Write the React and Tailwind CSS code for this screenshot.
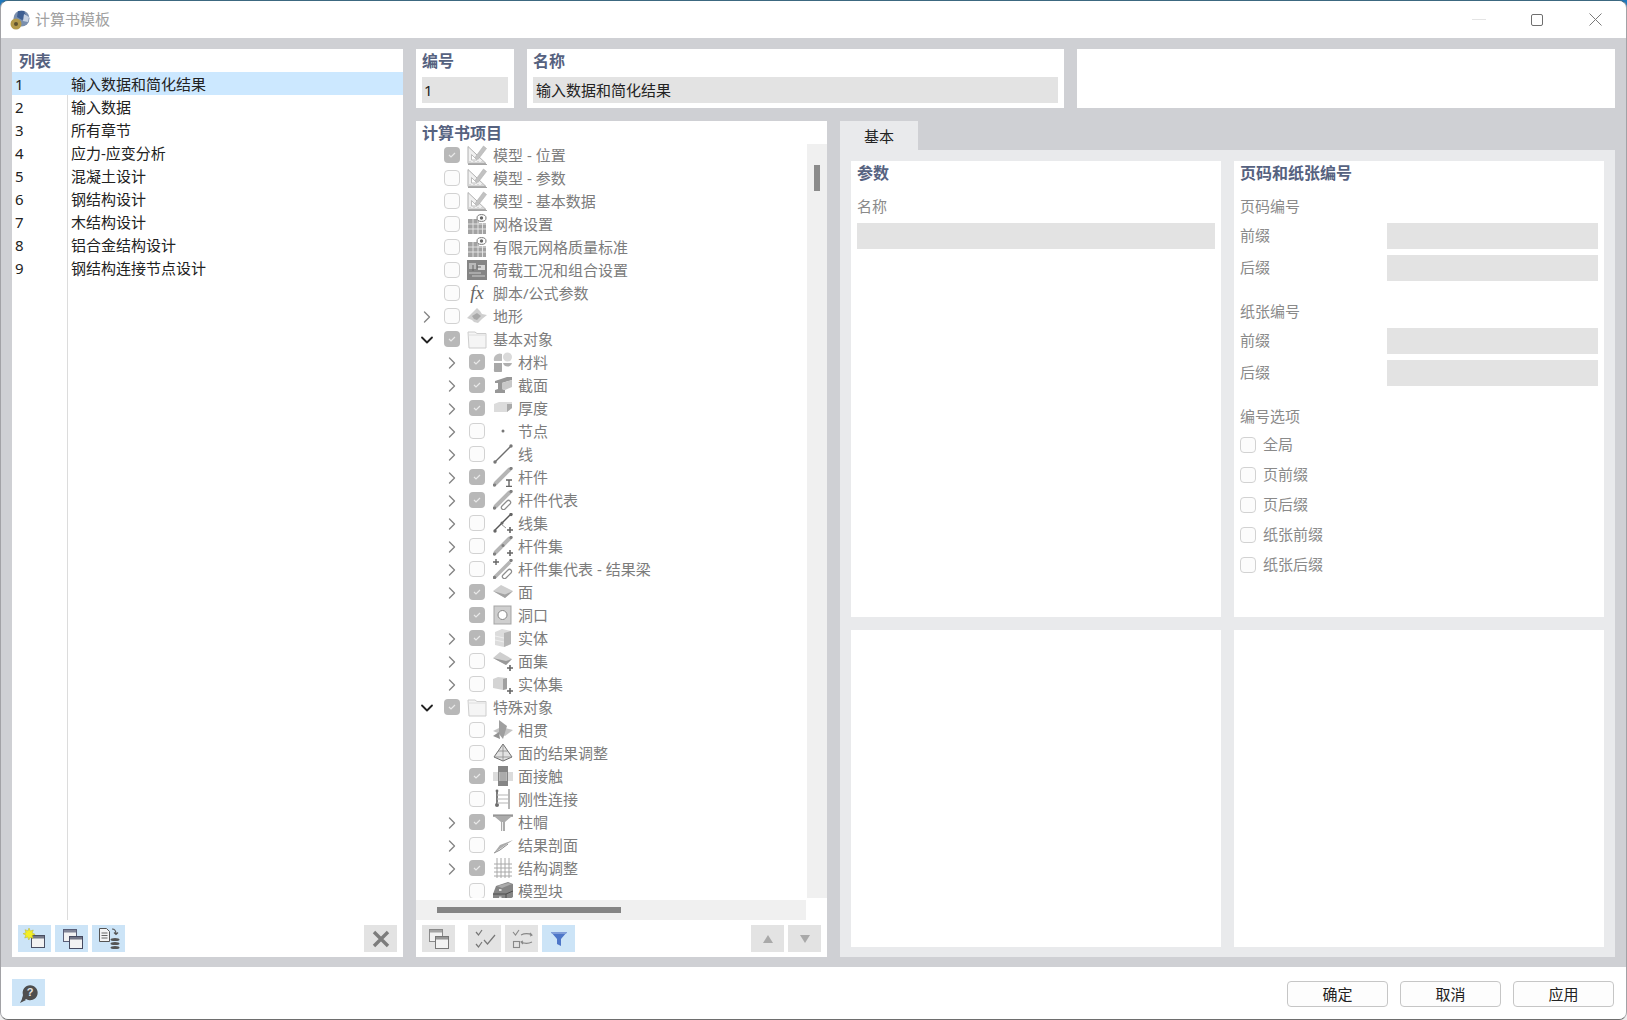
import { ChevronRight, ChevronDown } from "lucide-react";

/* Report template dialog. Everything is disabled grey except the left list. */

const LIST = ["输入数据和简化结果", "输入数据", "所有章节", "应力-应变分析", "混凝土设计", "钢结构设计", "木结构设计", "铝合金结构设计", "钢结构连接节点设计"];

function Ic({ children }) {
  return (
    <svg width="20" height="20" viewBox="0 0 20 20" className="block shrink-0">
      {children}
    </svg>
  );
}

const Plus = () => <path d="M14 17h6M17 14v6" stroke="#666" strokeWidth="1.600" fill="none" />;

const ICONS = {
  model: (
    <Ic>
      <path d="M1 1.500v17h18z" fill="#f0f0f0" stroke="#b0b0b0" />
      <path d="M4.500 9.500v5.500h5.500z" fill="#fff" stroke="#bdbdbd" />
      <path d="M1 19.500h19" stroke="#a5a5a5" />
      <path d="M3 16v3M5 17v2M7 16v3M9 17v2M11 16v3M13 17v2M15 16v3M17 17v2" stroke="#aaa" strokeWidth=".7" />
      <path d="M8 12.500 L16.500 1 L19.500 3.500 L11 14.500z" fill="#c2c2c2" stroke="#b0b0b0" strokeWidth=".6" />
    </Ic>
  ),
  mesh: (
    <Ic>
      <path d="M1 5h11v4h7v11H1z" fill="#a2a2a2" />
      <path d="M1 10h18M1 15h18M6 5v15M11 5v15M15.500 9v11" stroke="#e8e8e8" strokeWidth=".9" />
      <ellipse cx="14.500" cy="4" rx="4.500" ry="3.400" fill="#fff" stroke="#777" />
      <circle cx="14.500" cy="4" r="1.700" fill="#666" />
    </Ic>
  ),
  load: (
    <Ic>
      <rect x="0" y="0" width="20" height="20" fill="#858585" />
      <rect x="2" y="3" width="7" height="6" fill="#b9b9b9" />
      <rect x="11" y="5" width="7" height="5" fill="#d5d5d5" />
      <path d="M2 12h12v2H2zM5 15h13v2H5z" fill="#a9a9a9" />
      <path d="M6 5v6M10 7h4" stroke="#666" />
    </Ic>
  ),
  fx: null,
  terrain: (
    <Ic>
      <path d="M0 12l5-5 5-5 3 3 2 3 5 1-5 4-4 4-4-1-2-2z" fill="#cfcfcf" />
      <path d="M5 10l5-3 4 3-4 4-3-1z" fill="#a8a8a8" />
    </Ic>
  ),
  folder: (
    <Ic>
      <path d="M1 3h7l2 1.500h9V19H2z" fill="#f5f5f5" stroke="#cdcdcd" />
      <path d="M1.500 6h17" stroke="#dedede" />
    </Ic>
  ),
  material: (
    <Ic>
      <path d="M1 9a6 6 0 0 1 8-7v7z" fill="#bdbdbd" />
      <circle cx="14.500" cy="5" r="4.500" fill="#dadada" />
      <path d="M1 11h8v8a4 4 0 0 1-8-2z" fill="#a8a8a8" />
      <path d="M10 11h9a4.800 5.500 0 0 1-9 0z" fill="#b0b0b0" />
    </Ic>
  ),
  section: (
    <Ic>
      <path d="M2 6l12-4h5v3L9 8v6l3 1v3H2v-3l3-1V8L2 8z" fill="#979797" />
      <path d="M9 8l10-3v7l-7 3-3-1z" fill="#c8c8c8" />
    </Ic>
  ),
  thickness: (
    <Ic>
      <path d="M1 6l5-2h13v6l-5 4H1z" fill="#dcdcdc" />
      <path d="M14 6h5v4l-5 4z" fill="#aaa" />
    </Ic>
  ),
  node: (
    <Ic>
      <circle cx="10" cy="10" r="1.500" fill="#777" />
    </Ic>
  ),
  line: (
    <Ic>
      <path d="M2 18L18 2" stroke="#6e6e6e" strokeWidth="1.300" />
      <circle cx="2" cy="18" r="1.700" fill="#777" />
      <circle cx="18" cy="2" r="1.700" fill="#777" />
    </Ic>
  ),
  member: (
    <Ic>
      <path d="M2 17L17 2" stroke="#b5b5b5" strokeWidth="4" />
      <circle cx="1.500" cy="18" r="1.700" fill="#808080" />
      <circle cx="18" cy="1.500" r="1.700" fill="#808080" />
      <path d="M13 13h6M13 19.500h6M16 13v6" stroke="#666" strokeWidth="1.400" />
    </Ic>
  ),
  memberRep: (
    <Ic>
      <path d="M2 17L17 2" stroke="#b5b5b5" strokeWidth="4" />
      <circle cx="1.500" cy="18" r="1.700" fill="#808080" />
      <circle cx="18" cy="1.500" r="1.700" fill="#808080" />
      <path d="M9 16l5-5a2 2 0 0 1 3 3l-5 5a2 2 0 0 1-3-3z" fill="#fff" stroke="#8c8c8c" strokeWidth="1.200" />
    </Ic>
  ),
  lineSet: (
    <Ic>
      <path d="M2 17L17 2" stroke="#555" strokeWidth="1.400" />
      <path d="M8 11l5 4" stroke="#999" />
      <circle cx="2" cy="18" r="1.700" fill="#666" />
      <circle cx="18" cy="1.500" r="1.700" fill="#666" />
      <circle cx="9" cy="10" r="1.500" fill="#666" />
      <Plus />
    </Ic>
  ),
  memberSet: (
    <Ic>
      <path d="M2 17L17 2" stroke="#b5b5b5" strokeWidth="4" />
      <circle cx="1.500" cy="18" r="1.700" fill="#808080" />
      <circle cx="18" cy="1.500" r="1.700" fill="#808080" />
      <circle cx="10" cy="9.500" r="1.500" fill="#808080" />
      <Plus />
    </Ic>
  ),
  memberSetRep: (
    <Ic>
      <path d="M2 18L17 3" stroke="#b5b5b5" strokeWidth="3.500" />
      <circle cx="18" cy="1.500" r="1.700" fill="#808080" />
      <circle cx="1.500" cy="18.500" r="1.700" fill="#808080" />
      <path d="M0 3h6M3 0v6" stroke="#666" strokeWidth="1.400" />
      <path d="M10 16l5-5a2 2 0 0 1 3 3l-5 5a2 2 0 0 1-3-3z" fill="#fff" stroke="#8c8c8c" strokeWidth="1.200" />
    </Ic>
  ),
  surface: (
    <Ic>
      <path d="M0 9l8-6 12 6-8 7z" fill="#cfcfcf" />
      <path d="M0 9l12 7 8-7-8 3.500z" fill="#a3a3a3" />
    </Ic>
  ),
  opening: (
    <Ic>
      <rect x="1" y="1" width="17" height="18" fill="#cfcfcf" stroke="#a5a5a5" />
      <circle cx="9.500" cy="10" r="4.500" fill="#fff" stroke="#858585" />
    </Ic>
  ),
  solid: (
    <Ic>
      <path d="M2 4l7-3 9 2v13l-7 3-9-2z" fill="#dcdcdc" />
      <path d="M11 5l7-2v13l-7 3z" fill="#b5b5b5" />
      <path d="M2 8l9 2M2 12l9 2" stroke="#efefef" />
    </Ic>
  ),
  surfaceSet: (
    <Ic>
      <path d="M0 7l7-6 12 7-6 6z" fill="#cfcfcf" />
      <path d="M0 7l13 7 6-6-6 2z" fill="#999" />
      <Plus />
    </Ic>
  ),
  solidSet: (
    <Ic>
      <path d="M0 5l5-2 9 1v11l-4 1-10-2z" fill="#d4d4d4" />
      <path d="M10 5l4-1v11l-4 1z" fill="#a0a0a0" />
      <Plus />
    </Ic>
  ),
  intersect: (
    <Ic>
      <path d="M0 11l8-4 12 3-8 6z" fill="#c4c4c4" />
      <path d="M6 0l8 6-4 13-4-5z" fill="#9f9f9f" />
      <path d="M0 16l6-4 1 7z" fill="#929292" />
    </Ic>
  ),
  adjust: (
    <Ic>
      <path d="M10 1L1 14l9 4 9-4z" fill="#e2e2e2" stroke="#6e6e6e" />
      <path d="M10 1v17M1 14l18 0M5 8l10 0" stroke="#8c8c8c" strokeWidth=".8" />
    </Ic>
  ),
  contact: (
    <Ic>
      <rect x="0" y="6" width="20" height="9" fill="#dcdcdc" />
      <rect x="5" y="0" width="10" height="20" fill="#858585" />
      <rect x="6" y="6" width="8" height="9" fill="#b8b8b8" />
      <path d="M8 6v9M10 6v9M12 6v9" stroke="#949494" strokeWidth=".7" />
    </Ic>
  ),
  rigid: (
    <Ic>
      <path d="M4 2v14" stroke="#6e6e6e" strokeWidth="1.800" />
      <circle cx="4" cy="2" r="1.400" fill="#6e6e6e" />
      <circle cx="4" cy="16" r="2" fill="#6e6e6e" />
      <path d="M16 0v20" stroke="#6e6e6e" />
      <path d="M4 6h12M4 10h12M4 14h12" stroke="#b5b5b5" />
    </Ic>
  ),
  cap: (
    <Ic>
      <path d="M0 3h20v2h-2l-6 5v9H8v-9L2 5H0z" fill="#ababab" />
      <path d="M0 3h20" stroke="#808080" />
      <path d="M9.500 10v9" stroke="#eee" />
    </Ic>
  ),
  cutting: (
    <Ic>
      <path d="M1 18L20 5 7 10z" fill="#ababab" />
      <path d="M1 18l6-3 8-6" stroke="#8c8c8c" fill="none" />
    </Ic>
  ),
  modify: (
    <Ic>
      <path d="M1 6h18M1 10h18M1 14h18M1 18h18M4 0v20M8 0v20M12 0v20M16 0v20" stroke="#a8a8a8" />
    </Ic>
  ),
  block: (
    <Ic>
      <path d="M0 13l3-8 12-4 5 2v13l-6 4H0z" fill="#858585" />
      <path d="M4 5l11-3 4 1-10 4z" fill="#aaa" />
      <path d="M0 13h13v7M13 13l7-3" stroke="#4d4d4d" fill="none" />
      <rect x="6" y="8" width="2.500" height="2" fill="#ddd" />
      <rect x="6" y="15.500" width="2.500" height="2" fill="#ddd" />
    </Ic>
  ),
};

const TREE = [
  [1, "", true, "model", "模型 - 位置"],
  [1, "", false, "model", "模型 - 参数"],
  [1, "", false, "model", "模型 - 基本数据"],
  [1, "", false, "mesh", "网格设置"],
  [1, "", false, "mesh", "有限元网格质量标准"],
  [1, "", false, "load", "荷载工况和组合设置"],
  [1, "", false, "fx", "脚本/公式参数"],
  [1, "r", false, "terrain", "地形"],
  [1, "d", true, "folder", "基本对象"],
  [2, "r", true, "material", "材料"],
  [2, "r", true, "section", "截面"],
  [2, "r", true, "thickness", "厚度"],
  [2, "r", false, "node", "节点"],
  [2, "r", false, "line", "线"],
  [2, "r", true, "member", "杆件"],
  [2, "r", true, "memberRep", "杆件代表"],
  [2, "r", false, "lineSet", "线集"],
  [2, "r", false, "memberSet", "杆件集"],
  [2, "r", false, "memberSetRep", "杆件集代表 - 结果梁"],
  [2, "r", true, "surface", "面"],
  [2, "", true, "opening", "洞口"],
  [2, "r", true, "solid", "实体"],
  [2, "r", false, "surfaceSet", "面集"],
  [2, "r", false, "solidSet", "实体集"],
  [1, "d", true, "folder", "特殊对象"],
  [2, "", false, "intersect", "相贯"],
  [2, "", false, "adjust", "面的结果调整"],
  [2, "", true, "contact", "面接触"],
  [2, "", false, "rigid", "刚性连接"],
  [2, "r", true, "cap", "柱帽"],
  [2, "r", false, "cutting", "结果剖面"],
  [2, "r", true, "modify", "结构调整"],
  [2, "", false, "block", "模型块"],
];

function Check({ checked }) {
  if (!checked)
    return <span className="block h-4 w-4 shrink-0 rounded-[4px] border border-[#d2d2d2] bg-[#fcfcfc]" />;
  return (
    <span className="flex h-4 w-4 shrink-0 items-center justify-center rounded-[4px] bg-[#b8b8b8]">
      <svg width="10" height="10" viewBox="0 0 10 10">
        <path d="M2 5l2 2 4-4" stroke="#e8e8e8" strokeWidth="1.200" fill="none" />
      </svg>
    </span>
  );
}

function TreeRow({ level, chevron, checked, icon, label }) {
  return (
    <div className={`flex h-[23px] shrink-0 items-center whitespace-nowrap text-[15px] text-[#7c7c7c] ${level === 2 ? "pl-[25px]" : ""}`}>
      <span className="flex w-[22px] shrink-0 justify-center">
        {chevron === "r" && <ChevronRight size={20} color="#858585" strokeWidth={1.600} />}
        {chevron === "d" && <ChevronDown size={20} color="#222" strokeWidth={2.200} />}
      </span>
      <span className="mb-[2px] ml-[6px]">
        <Check checked={checked} />
      </span>
      <span className={`mb-[2px] flex w-5 shrink-0 items-center justify-center ${level === 2 ? "ml-2" : "ml-[7px]"}`}>
        {icon === "fx" ? <span className="font-['Liberation_Serif',serif] text-[19px] italic leading-none text-[#666]">fx</span> : ICONS[icon]}
      </span>
      <span className={level === 2 ? "ml-[5px]" : "ml-[6px]"}>{label}</span>
    </div>
  );
}

function ToolBtn({ blue, children }) {
  return (
    <span className={`flex h-[27px] w-[33px] shrink-0 items-center justify-center ${blue ? "bg-[#cce4f7]" : "bg-[#e3e3e3]"}`}>
      {children}
    </span>
  );
}

const Win = ({ x, y, stroke, fill = "#f2f2f2" }) => (
  <g>
    <rect x={x} y={y} width="13" height="12" fill={fill} stroke={stroke} />
    <rect x={x} y={y} width="13" height="3" fill={stroke} opacity=".75" />
  </g>
);

function Label({ children }) {
  return <div className="flex h-6 items-center pb-[2px] text-[15px] text-[#8a8a8a]">{children}</div>;
}

function Heading({ children }) {
  return <div className="flex h-6 items-center text-[16px] font-bold text-[#56627f]">{children}</div>;
}

function FieldRow({ label }) {
  return (
    <div className="flex h-[26px] items-center justify-between text-[15px] text-[#8a8a8a]">
      <span className="pb-[2px]">{label}</span>
      <span className="h-[26px] w-[211px] bg-[#e3e3e3]" />
    </div>
  );
}

function Opt({ label }) {
  return (
    <div className="flex h-[30px] items-center text-[15px] text-[#8a8a8a]">
      <Check />
      <span className="ml-[7px] pb-px">{label}</span>
    </div>
  );
}

function FooterBtn({ label }) {
  return (
    <span className="flex h-[26px] w-[101px] items-center justify-center rounded-[4px] border border-[#c6c6c6] bg-[#fdfdfd] text-[15px] text-[#222]">
      {label}
    </span>
  );
}

export default function App() {
  return (
    <div className="h-[1020px] w-[1627px] overflow-hidden bg-[linear-gradient(#1f78bd_50%,#eeeeee_50%)] font-['Noto_Sans','Noto_Sans_CJK_SC',sans-serif]">
      <div className="flex h-full flex-col overflow-hidden rounded-[8px] border border-[#a2a2a6] border-t-[#3c6880] border-b-[#6e6e6e] bg-[#cfd0d4]">
        {/* title bar */}
        <div className="flex h-[37px] shrink-0 items-center bg-white pl-[9px] pr-[2px]">
          <svg width="20" height="20" viewBox="0 0 20 20" className="shrink-0">
            <circle cx="11.500" cy="8.500" r="8" fill="#7a8fae" />
            <path d="M8 1l6 0 3 7-5 2-5-3z" fill="#3e5f92" />
            <path d="M14 4l5 3-1 5-5-1z" fill="#c7d2e2" />
            <circle cx="6" cy="14" r="5.500" fill="#b39a4a" />
            <circle cx="6" cy="14" r="2" fill="#5f5230" />
          </svg>
          <span className="ml-[5px] text-[15px] text-[#a0a0a0]">计算书模板</span>
          <div className="ml-auto flex items-center">
            <span className="flex h-[37px] w-[58px] items-center justify-center">
              <span className="h-px w-[14px] bg-[#e4e4e4]" />
            </span>
            <span className="flex h-[37px] w-[58px] items-center justify-center">
              <span className="h-3 w-3 rounded-[2px] border border-[#6f6f6f]" />
            </span>
            <span className="flex h-[37px] w-[58px] items-center justify-center">
              <svg width="13" height="13" viewBox="0 0 13 13">
                <path d="M.5.5l12 12M12.500.5l-12 12" stroke="#7a7a7a" fill="none" />
              </svg>
            </span>
          </div>
        </div>

        {/* body */}
        <div className="flex min-h-0 flex-1 gap-[13px] pb-[10px] pl-[11px] pr-[11px] pt-[11px]">
          {/* list */}
          <div className="flex w-[391px] shrink-0 flex-col bg-white pb-[5px]">
            <div className="flex h-[23px] shrink-0 items-center pl-[7px]"><span className="text-[16px] font-bold text-[#56627f]">列表</span></div>
            {LIST.map((t, i) => (
              <div key={t} className={`flex h-[23px] shrink-0 text-[15px] text-[#222] ${i === 0 ? "bg-[#cce8ff]" : ""}`}>
                <span className={`flex h-[23px] w-[56px] shrink-0 items-center pl-[3px] pt-[2px] ${i === 0 ? "" : "border-r border-[#dcdcdc]"}`}>{i + 1}</span>
                <span className="flex h-[23px] items-center pl-[3px] pt-[2px]">{t}</span>
              </div>
            ))}
            <div className="w-[56px] flex-1 border-r border-[#dcdcdc]" />
            <div className="mt-[5px] flex items-center gap-1 pl-[6px] pr-[6px]">
              <ToolBtn blue>
                <svg width="24" height="24" viewBox="0 0 24 24">
                  <Win x={8.500} y={8.500} stroke="#4a4f63" />
                  <path d="M6 1l1.300 3 3-1-1.200 3 3 1.300-3 1.200 1 3-3-1.200L5.800 13 4.700 10l-3 1 1.200-3L0 6.700l3-1-1-3 3 1.200z" fill="#f3ee24" stroke="#b9b32a" strokeWidth=".5" />
                </svg>
              </ToolBtn>
              <ToolBtn blue>
                <svg width="24" height="24" viewBox="0 0 24 24">
                  <Win x={3.500} y={2.500} stroke="#5a5f78" />
                  <Win x={9.500} y={9.500} stroke="#454a60" />
                </svg>
              </ToolBtn>
              <ToolBtn blue>
                <svg width="24" height="24" viewBox="0 0 24 24" fill="none">
                  <path d="M2.500 1.500h7l3 3v10h-10z" fill="#f4f4f4" stroke="#555" />
                  <path d="M4.500 6h6M4.500 8.500h6M4.500 11h6" stroke="#666" />
                  <path d="M15 2c3 0 4 2 4 5M17 5.500l2 2 2-2" stroke="#555" strokeWidth="1.200" />
                  <ellipse cx="18" cy="12.500" rx="4.500" ry="1.600" fill="#555" />
                  <ellipse cx="18" cy="16.500" rx="4.500" ry="1.600" fill="#555" />
                  <ellipse cx="18" cy="20.500" rx="4.500" ry="1.600" fill="#555" />
                </svg>
              </ToolBtn>
              <span className="ml-auto">
                <ToolBtn>
                  <svg width="20" height="20" viewBox="0 0 20 20">
                    <path d="M3 3l14 14M17 3L3 17" stroke="#7d7d7d" strokeWidth="3.400" fill="none" />
                  </svg>
                </ToolBtn>
              </span>
            </div>
          </div>

          {/* middle and right */}
          <div className="flex min-w-0 flex-1 flex-col gap-[13px]">
            <div className="flex h-[59px] shrink-0 gap-[13px]">
              <div className="w-[98px] shrink-0 bg-white px-[6px]">
                <div className="flex h-[23px] items-center pt-[1px] text-[16px] font-bold text-[#56627f]">编号</div>
                <div className="mt-[5px] flex h-[26px] items-center bg-[#e3e3e3] pl-[2px] text-[15px] text-[#222]">1</div>
              </div>
              <div className="w-[537px] shrink-0 bg-white px-[6px]">
                <div className="flex h-[23px] items-center pt-[1px] text-[16px] font-bold text-[#56627f]">名称</div>
                <div className="mt-[5px] flex h-[26px] items-center bg-[#e3e3e3] pl-[3px] text-[15px] text-[#222]">输入数据和简化结果</div>
              </div>
              <div className="flex-1 bg-white" />
            </div>

            <div className="flex min-h-0 flex-1 gap-[13px]">
              {/* tree */}
              <div className="flex w-[411px] shrink-0 flex-col bg-white">
                <div className="flex h-[23px] shrink-0 items-center pl-[6px] text-[16px] font-bold text-[#56627f]">计算书项目</div>
                <div className="flex h-[754px] shrink-0">
                  <div className="flex min-w-0 flex-1 flex-col overflow-hidden">
                    {TREE.map(([level, chevron, checked, icon, label]) => (
                      <TreeRow key={label} level={level} chevron={chevron} checked={checked} icon={icon} label={label} />
                    ))}
                  </div>
                  <div className="w-5 shrink-0 bg-[#f0f0f0] pl-[7px] pt-[21px]">
                    <div className="h-[26px] w-[6px] bg-[#8b8b8b]" />
                  </div>
                </div>
                <div className="mt-[2px] h-5 w-[390px] shrink-0 bg-[#f0f0f0] pl-[21px] pt-[7px]">
                  <div className="h-[6px] w-[184px] bg-[#858585]" />
                </div>
                <div className="mt-[5px] flex items-center pl-[6px] pr-[6px]">
                  <ToolBtn>
                    <svg width="24" height="24" viewBox="0 0 24 24">
                      <Win x={2.500} y={2.500} stroke="#8a8a8a" />
                      <Win x={8.500} y={9.500} stroke="#777" />
                    </svg>
                  </ToolBtn>
                  <span className="ml-[13px]">
                    <ToolBtn>
                      <svg width="24" height="24" viewBox="0 0 24 24" fill="none" stroke="#777" strokeWidth="1.200">
                        <path d="M3 5l2.500 3L9 3M3 17l2.500 3L9 15M11 13l3.500 4L22 8" />
                      </svg>
                    </ToolBtn>
                  </span>
                  <span className="ml-1">
                    <ToolBtn>
                      <svg width="24" height="24" viewBox="0 0 24 24" fill="none" stroke="#888" strokeWidth="1.100">
                        <path d="M3 5l2.500 3L9 3" />
                        <rect x="3.500" y="14.500" width="6" height="6" />
                        <path d="M11 8c4-2 7-2 11 0M20 6l2 2-2 1M22 15c-4 2-7 2-11 0M13 17l-2-2 2-1" />
                      </svg>
                    </ToolBtn>
                  </span>
                  <span className="ml-1">
                    <ToolBtn blue>
                      <svg width="20" height="20" viewBox="0 0 20 20">
                        <path d="M2 3h16l-6 7v7l-4-2v-5z" fill="#4d76c8" />
                        <path d="M2 3h16l-1 2H3z" fill="#7e9cd8" />
                      </svg>
                    </ToolBtn>
                  </span>
                  <span className="ml-auto">
                    <ToolBtn>
                      <svg width="12" height="10" viewBox="0 0 12 10"><path d="M6 1l5 8H1z" fill="#a9a9a9" /></svg>
                    </ToolBtn>
                  </span>
                  <span className="ml-1">
                    <ToolBtn>
                      <svg width="12" height="10" viewBox="0 0 12 10"><path d="M6 9l5-8H1z" fill="#a9a9a9" /></svg>
                    </ToolBtn>
                  </span>
                </div>
              </div>

              {/* tab pane */}
              <div className="flex min-w-0 flex-1 flex-col">
                <div className="flex h-[29px] shrink-0">
                  <span className="flex w-[78px] items-center justify-center bg-[#e9eaec] pt-[2px] text-[15px] text-[#222]">基本</span>
                </div>
                <div className="grid min-h-0 flex-1 grid-cols-2 grid-rows-[456px_1fr] gap-[13px] bg-[#e9eaec] pb-[10px] pl-[11px] pr-[11px] pt-[11px]">
                  <div className="bg-white px-[6px]">
                    <Heading>参数</Heading>
                    <div className="mt-[10px]"><Label>名称</Label></div>
                    <div className="mt-1 h-[26px] bg-[#e3e3e3]" />
                  </div>
                  <div className="bg-white px-[6px]">
                    <Heading>页码和纸张编号</Heading>
                    <div className="mt-[10px]"><Label>页码编号</Label></div>
                    <div className="mt-1 flex flex-col gap-[6px]">
                      <FieldRow label="前缀" />
                      <FieldRow label="后缀" />
                    </div>
                    <div className="mt-[19px]"><Label>纸张编号</Label></div>
                    <div className="mt-1 flex flex-col gap-[6px]">
                      <FieldRow label="前缀" />
                      <FieldRow label="后缀" />
                    </div>
                    <div className="mt-[19px]"><Label>编号选项</Label></div>
                    <div className="mt-px">
                      <Opt label="全局" />
                      <Opt label="页前缀" />
                      <Opt label="页后缀" />
                      <Opt label="纸张前缀" />
                      <Opt label="纸张后缀" />
                    </div>
                  </div>
                  <div className="bg-white" />
                  <div className="bg-white" />
                </div>
              </div>
            </div>
          </div>
        </div>

        {/* footer */}
        <div className="flex h-[52px] shrink-0 items-start bg-white pl-[11px] pr-3">
          <span className="mt-3">
            <ToolBtn blue>
              <svg width="22" height="22" viewBox="0 0 22 22">
                <path d="M4 17l1-4a7.500 7.500 0 1 1 3 4z" fill="#4e4e4e" />
                <path d="M2 21l3-6 3 3z" fill="#4e4e4e" />
                <text x="12" y="14" textAnchor="middle" fontSize="11" fontWeight="700" fill="#e6e6e6" fontFamily="Liberation Sans">?</text>
              </svg>
            </ToolBtn>
          </span>
          <div className="ml-auto mt-[14px] flex gap-3">
            <FooterBtn label="确定" />
            <FooterBtn label="取消" />
            <FooterBtn label="应用" />
          </div>
        </div>
      </div>
    </div>
  );
}
